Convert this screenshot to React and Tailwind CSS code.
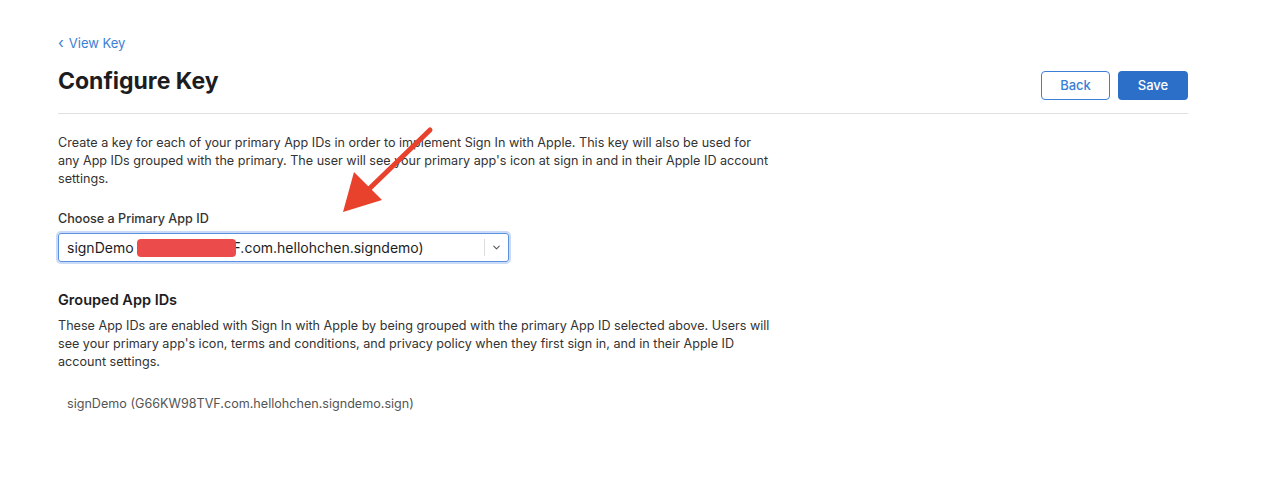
import { ChevronDown } from 'lucide-react';

const font = { fontFamily: 'Inter, "Noto Sans", sans-serif' };

// Red annotation arrow drawn over the page
function Arrow() {
  return (
    <svg className="absolute pointer-events-none" style={{ left: 330, top: 120 }} width="110" height="100" viewBox="0 0 110 100">
      <path d="M100 10 L38 70" stroke="#e8412c" strokeWidth="5" strokeLinecap="round" fill="none" />
      <path d="M13 92 L24 52 L52 80 Z" fill="#e8412c" />
    </svg>
  );
}

export default function App() {
  return (
    <div className="relative w-[1280px] h-[490px] bg-white text-[#333]" style={font}>
      <div className="px-[58px] pr-[92px] pt-[34px]">
        <a className="flex items-center gap-[5px] text-[13px] text-[#3b7fd6] leading-[18px]">
          <span className="text-[15px] leading-[18px]">‹</span>
          <span>View Key</span>
        </a>
        <div className="flex items-center justify-between mt-[12px] pb-[13px] border-b border-[#e0e0e0]">
          <h1 className="text-[23px] font-bold text-[#1d1d1f] leading-[30px] -mt-[3px]">Configure Key</h1>
          <div className="flex gap-2 mt-[7px]">
            <button className="w-[69px] h-[29px] rounded-[4px] border border-[#3b7fd6] text-[#3b7fd6] text-[13px] font-medium bg-white">Back</button>
            <button className="w-[70px] h-[29px] rounded-[4px] bg-[#2b6fc9] text-white text-[13px] font-medium">Save</button>
          </div>
        </div>

        <p className="mt-[20px] w-[720px] text-[12.6px] leading-[18px] text-[#333]">
          Create a key for each of your primary App IDs in order to implement Sign In with Apple. This key will also be used for<br />
          any App IDs grouped with the primary. The user will see your primary app's icon at sign in and in their Apple ID account settings.
        </p>

        <label className="block mt-[22px] text-[12.6px] font-medium leading-[18px] text-[#333]">Choose a Primary App ID</label>
        <div className="mt-[5px] w-[451px] h-[29px] rounded-[3px] border border-[#5b8fe0] ring-[2px] ring-[#c9dbf7] flex items-center">
          <div className="relative flex-1 flex items-center pl-[8px] text-[14px] text-[#1d1d1f]">
            <span>signDemo</span>
            <span className="ml-[3px] w-[96px] h-[18px]" />
            <span>F.com.hellohchen.signdemo)</span>
            <span className="absolute left-[78px] top-1/2 -translate-y-1/2 w-[99px] h-[18px] rounded-[4px] bg-[#ec4b4b]" />
          </div>
          <div className="w-px h-[17px] bg-[#dcdcdc]" />
          <div className="w-[23px] flex justify-center text-[#555]">
            <ChevronDown size={11} strokeWidth={2.25} />
          </div>
        </div>

        <h2 className="mt-[28px] text-[14.5px] font-semibold text-[#1d1d1f] leading-[20px]">Grouped App IDs</h2>
        <p className="mt-[7px] w-[720px] text-[12.6px] leading-[18px] text-[#333]">
          These App IDs are enabled with Sign In with Apple by being grouped with the primary App ID selected above. Users will see your primary app's icon, terms and conditions, and privacy policy when they first sign in, and in their Apple ID account settings.
        </p>
        <div className="mt-[24px] pl-[9px] text-[12.6px] leading-[18px] text-[#555]">signDemo (G66KW98TVF.com.hellohchen.signdemo.sign)</div>
      </div>
      <Arrow />
    </div>
  );
}
